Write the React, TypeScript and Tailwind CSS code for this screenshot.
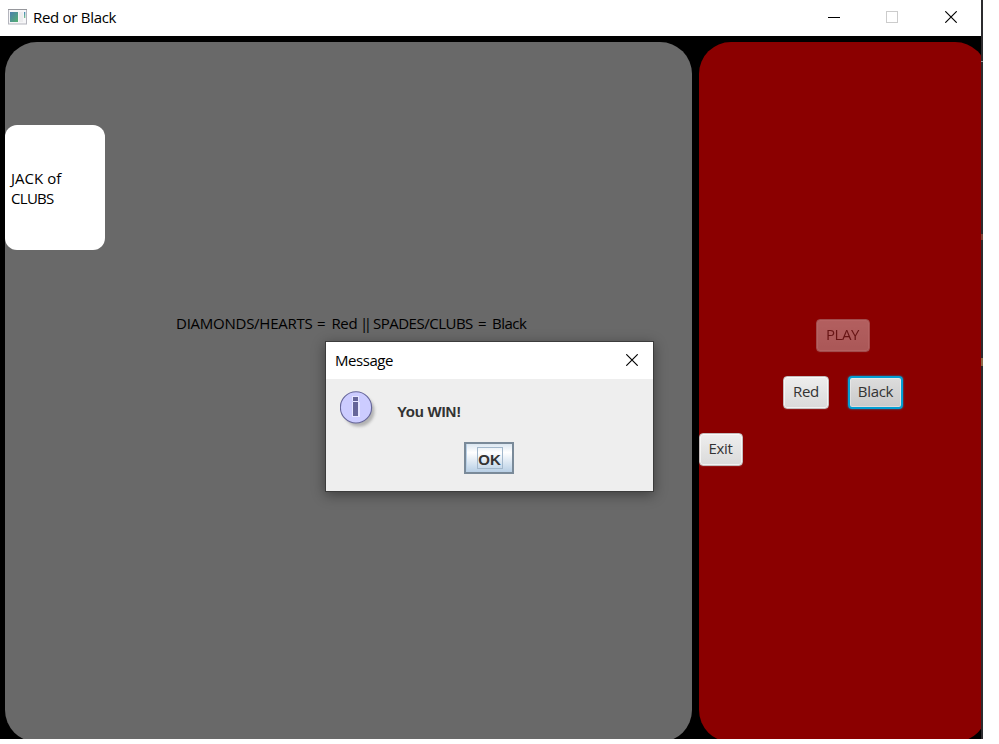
import type { ReactNode } from "react";

const uiFont = "font-['Open_Sans','Noto_Sans',sans-serif]";

function CloseGlyph() {
  return (
    <svg width="12" height="12" viewBox="0 0 12 12" className="block shrink-0">
      <path d="M0.3 0.3L11.7 11.7M11.7 0.3L0.3 11.7" stroke="#000" strokeWidth="1.15" fill="none" />
    </svg>
  );
}

function AppIcon() {
  return (
    <svg width="19" height="16" viewBox="0 0 19 16" className="block shrink-0">
      <defs>
        <linearGradient id="screen" x1="0" y1="0" x2="1" y2="1">
          <stop offset="0" stopColor="#4a7fb0" />
          <stop offset="1" stopColor="#55b070" />
        </linearGradient>
        <linearGradient id="bar" x1="0" y1="0" x2="0" y2="1">
          <stop offset="0" stopColor="#4488b8" />
          <stop offset="1" stopColor="#79c48c" />
        </linearGradient>
      </defs>
      <rect x="0.5" y="0.5" width="18" height="14.5" fill="#f6f6f8" stroke="#b4b5bd" />
      <path d="M0 0.5H19" stroke="#96979c" />
      <rect x="2" y="3" width="8" height="10" fill="url(#screen)" />
      <rect x="11" y="3" width="4" height="10" fill="#ececee" />
      <rect x="16" y="3" width="1.3" height="6" fill="url(#bar)" />
    </svg>
  );
}

function InfoIcon() {
  return (
    <svg width="38" height="40" viewBox="0 0 38 40" className="block shrink-0">
      <defs>
        <filter id="soft" x="-30%" y="-30%" width="160%" height="160%">
          <feGaussianBlur stdDeviation="1.5" />
        </filter>
      </defs>
      <circle cx="19" cy="20" r="15.5" fill="#777" opacity="0.5" filter="url(#soft)" />
      <circle cx="16" cy="16.4" r="15.6" fill="#ccccff" stroke="#666699" strokeWidth="1.1" />
      <path d="M12 5H19V11H20V26H12V11H13V10H12Z" fill="#e6e6ff" />
      <rect x="13" y="6" width="5" height="4" fill="#666699" />
      <rect x="13" y="11" width="5" height="14" fill="#666699" />
    </svg>
  );
}

function FxButton({ className, children }: { className: string; children: ReactNode }) {
  return (
    <button
      className={`flex h-[33px] items-center justify-center rounded-[4px] pb-[3px] text-[15px] text-[#333333] ${className}`}
    >
      {children}
    </button>
  );
}

const raised =
  "border border-[#c4bcbc] bg-linear-to-b from-[#eeeeee] to-[#dadada] shadow-[inset_0_0_0_1px_rgba(255,255,255,0.65),0_1px_0_rgba(255,255,255,0.08)]";

function TitleBar() {
  return (
    <header className="flex h-9 items-center bg-white pl-2 pr-6">
      <div className="-mt-[2px]">
        <AppIcon />
      </div>
      <h1 className="-mt-[2px] ml-[6px] text-[15px] leading-5 tracking-[-0.29px]">Red or Black</h1>
      <div className="-mt-[2px] ml-auto flex items-center">
        <span className="h-px w-3 bg-black" />
        <span className="ml-[46px] h-3 w-3 border border-[#cccccc]" />
        <span className="ml-[47px]">
          <CloseGlyph />
        </span>
      </div>
    </header>
  );
}

function MessageDialog() {
  return (
    <section className="absolute left-[325px] top-[341px] flex h-[151px] w-[329px] flex-col border border-[#3c3c3c] bg-[#eeeeee] shadow-[0_3px_12px_rgba(0,0,0,0.4)]">
      <div className="flex h-[37px] shrink-0 items-center bg-white pl-[9px] pr-[15px]">
        <h2 className={`-mt-[2px] text-[15px] leading-5 tracking-[-0.45px] ${uiFont}`}>Message</h2>
        <span className="-mt-px ml-auto">
          <CloseGlyph />
        </span>
      </div>
      <div className="flex h-[63px] shrink-0 items-start pl-[14px] pt-3">
        <InfoIcon />
        <p className="ml-[19px] mt-3 font-['Liberation_Sans',sans-serif] text-[15px] font-bold leading-[17px] tracking-[-0.2px] text-[#333333]">
          You WIN!
        </p>
      </div>
      <div className="flex pl-[138px]">
        <button className="flex h-8 w-[50px] items-center justify-center border-2 border-[#7a8a99] bg-linear-to-b from-[#dce7f1] via-white via-30% to-[#b8cfe5] font-['Liberation_Sans',sans-serif] text-[15px] font-bold text-[#333333] shadow-[inset_1px_0_0_#b8cfe5]">
          <span className="ml-px flex h-[22px] w-[26px] items-center justify-center border border-[#a3b8cc] pt-[3px] leading-none">
            OK
          </span>
        </button>
      </div>
    </section>
  );
}

export default function App() {
  return (
    <div className={`relative h-[744px] w-[999px] overflow-hidden bg-white text-black ${uiFont}`}>
      <div className="flex h-[739px] w-[983px]">
        <main className="flex w-[981px] flex-col">
          <TitleBar />
          <div className="flex min-h-0 flex-1 overflow-hidden bg-black pl-[5px] pt-[6px]">
            <section className="flex h-[700px] w-[687.4px] shrink-0 flex-col rounded-[32px] bg-[#696969] pt-[83px]">
              <div className="flex h-[125px] w-[100px] items-center rounded-[12px] bg-white pl-[6px] text-[15px] leading-5">
                <p>
                  <span className="tracking-[0.05px]">JACK of</span>
                  <br />
                  <span className="tracking-[-0.7px]">CLUBS</span>
                </p>
              </div>
              <p className="ml-[171px] mt-[63px] flex whitespace-pre text-[15px] leading-5 tracking-[-0.25px]">
                <span className="w-[141px]">DIAMONDS/HEARTS </span>
                <span className="w-[14.5px]">= </span>
                <span className="w-[28.5px] tracking-[-0.4px]">Red </span>
                <span className="w-[13px] tracking-[-4.5px]">|| </span>
                <span className="w-[105px] tracking-[-0.5px]">SPADES/CLUBS </span>
                <span className="w-[14px]">= </span>
                <span className="tracking-[-0.5px]">Black</span>
              </p>
            </section>
            <section className="ml-[6.6px] flex h-[700px] w-[288px] shrink-0 flex-col rounded-[32px] bg-[#8b0000] pt-[277px]">
              <div className="flex justify-center">
                <FxButton className={`w-[54px] pr-px tracking-[-0.4px] opacity-40 ${raised}`}>PLAY</FxButton>
              </div>
              <div className="mt-6 flex justify-center gap-[19px] pl-px">
                <FxButton className={`w-[46px] pr-px tracking-[-0.3px] ${raised}`}>Red</FxButton>
                <FxButton className="w-[55px] border-2 border-[#039ed3] bg-linear-to-b from-[#dddddd] to-[#c9c9c9] pr-px tracking-[-0.3px] shadow-[0_0_2px_#039ed3,inset_0_0_0_1px_rgba(255,255,255,0.35)]">
                  Black
                </FxButton>
              </div>
              <div className="mt-6 flex">
                <FxButton className={`w-[44px] pr-px tracking-[-0.3px] ${raised}`}>Exit</FxButton>
              </div>
            </section>
          </div>
        </main>
        <aside className="flex w-[2px] flex-col bg-[#2b2b2e]">
          <span className="mt-[61px] h-px bg-[#9a9a9a]" />
          <span className="mt-[172px] h-[6px] bg-[#7a4438]" />
          <span className="mt-[118px] h-[8px] bg-[#8a6a48]" />
        </aside>
      </div>
      <MessageDialog />
    </div>
  );
}
